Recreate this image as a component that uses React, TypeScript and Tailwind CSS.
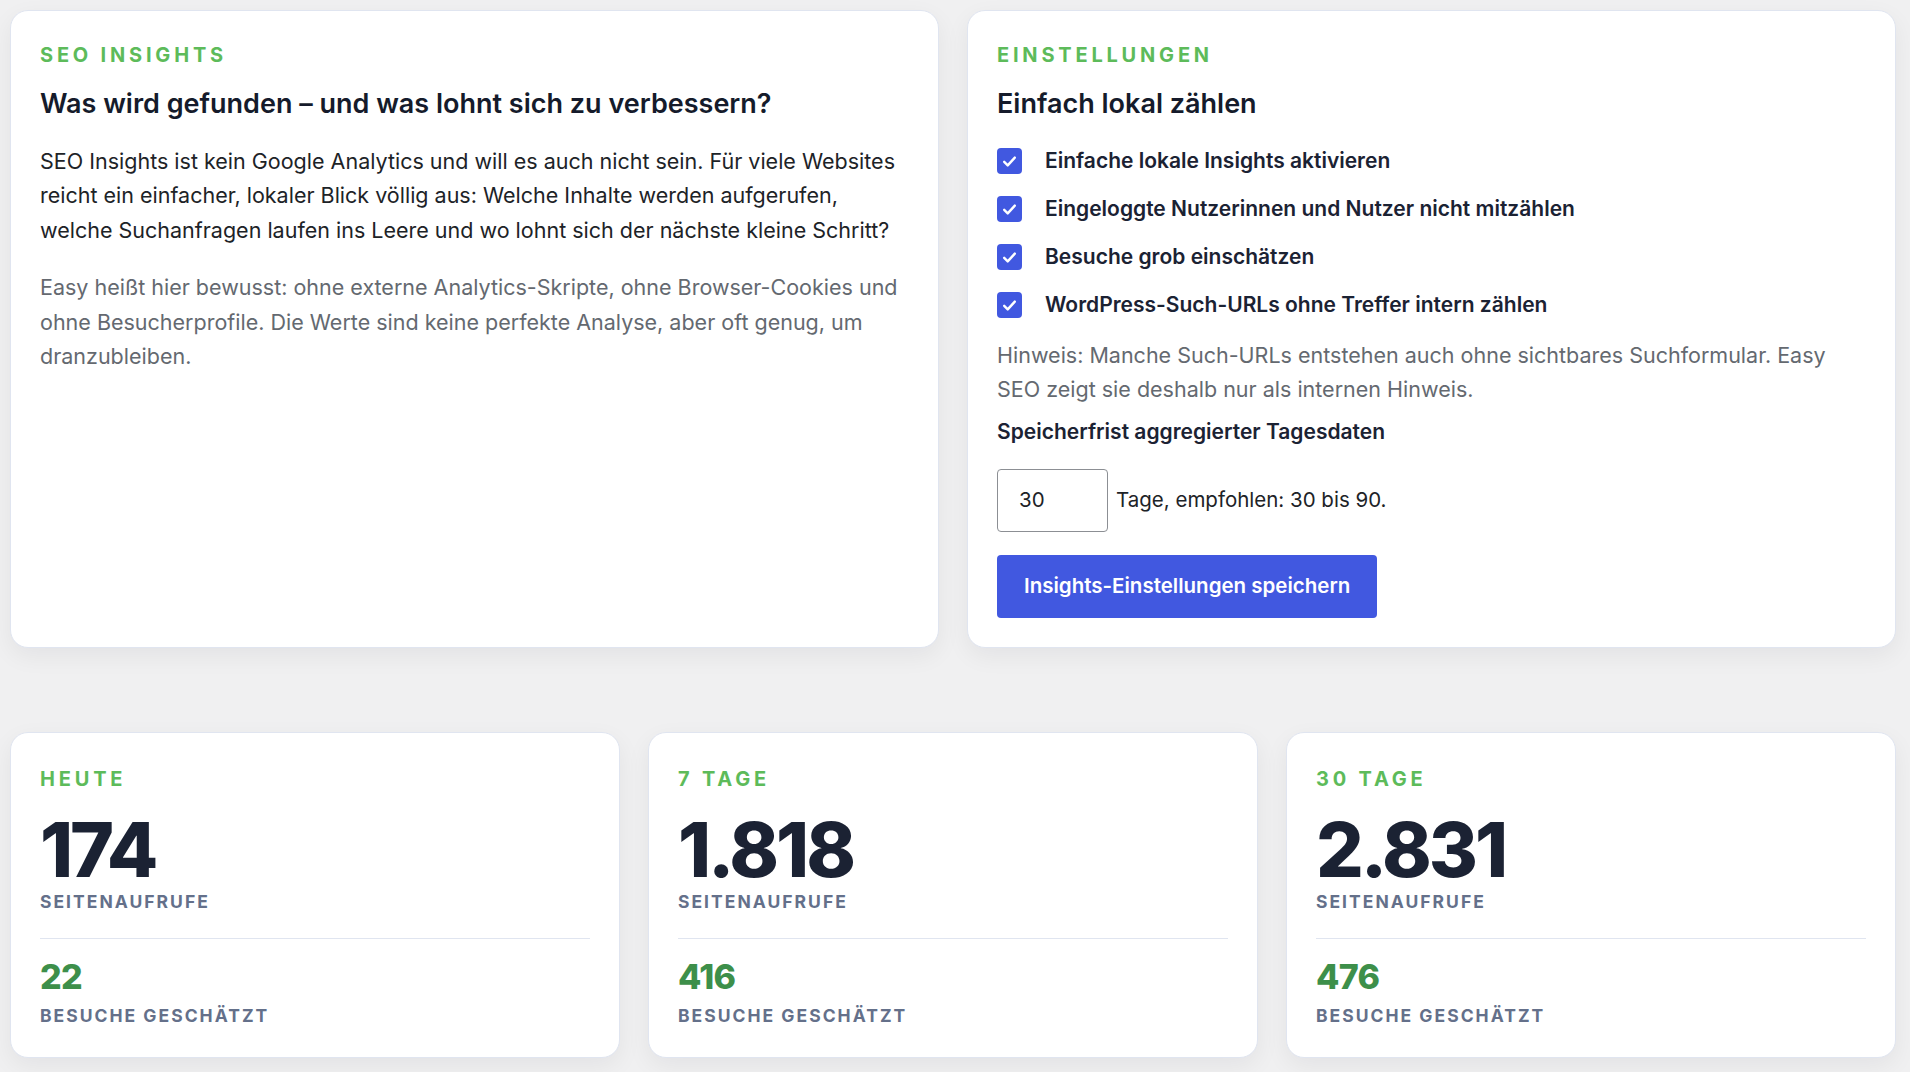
import React from "react";

const stats = [
  { label: "Heute", views: "174", visits: "22" },
  { label: "7 Tage", views: "1.818", visits: "416" },
  { label: "30 Tage", views: "2.831", visits: "476" },
];

const options = [
  "Einfache lokale Insights aktivieren",
  "Eingeloggte Nutzerinnen und Nutzer nicht mitzählen",
  "Besuche grob einschätzen",
  "WordPress-Such-URLs ohne Treffer intern zählen",
];

function CheckBox() {
  return (
    <span className="flex h-[26px] w-[25px] shrink-0 items-center justify-center rounded-[4px] bg-[#4158e0]">
      <svg width="17" height="17" viewBox="0 0 24 24" fill="none">
        <path d="M4.5 12.5l5 5L19.5 6.5" stroke="white" strokeWidth="3.4" strokeLinecap="round" strokeLinejoin="round" />
      </svg>
    </span>
  );
}

export default function App() {
  return (
    <div className="min-h-screen bg-[#f0f0f1] pt-[10px] pl-[10px] pr-[14px] pb-[14px] font-['Inter',sans-serif] text-[#1d2327]">
      {/* Top row */}
      <div className="grid grid-cols-2 gap-[28px]">
        {/* Intro */}
        <section className="rounded-[18px] border border-[#e0e5f0] bg-white p-[29px] shadow-[0_8px_24px_rgba(15,23,42,0.06)]">
          <div className="text-[20px] leading-[30px] font-bold uppercase tracking-[0.19em] text-[#5dbb5a]">SEO Insights</div>
          <h2 className="mt-[16px] text-[27px] leading-[35px] font-semibold text-[#151b2b]">
            Was wird gefunden – und was lohnt sich zu verbessern?
          </h2>
          <p className="mt-[23px] text-[21.5px] leading-[34.4px] text-[#1d2327]">
            SEO Insights ist kein Google Analytics und will es auch nicht sein. Für viele Websites reicht ein einfacher,
            lokaler Blick völlig aus: Welche Inhalte werden aufgerufen, welche Suchanfragen laufen ins Leere und wo lohnt
            sich der nächste kleine Schritt?
          </p>
          <p className="mt-[23px] text-[21.5px] leading-[34.6px] text-[#646970]">
            Easy heißt hier bewusst: ohne externe Analytics-Skripte, ohne Browser-Cookies und ohne Besucherprofile. Die
            Werte sind keine perfekte Analyse, aber oft genug, um dranzubleiben.
          </p>
        </section>

        {/* Settings */}
        <section className="rounded-[18px] border border-[#e0e5f0] bg-white p-[29px] shadow-[0_8px_24px_rgba(15,23,42,0.06)]">
          <div className="text-[20px] leading-[30px] font-bold uppercase tracking-[0.19em] text-[#5dbb5a]">Einstellungen</div>
          <h2 className="mt-[16px] text-[27px] leading-[35px] font-semibold text-[#151b2b]">Einfach lokal zählen</h2>
          <div className="mt-[27px] flex flex-col gap-[22px]">
            {options.map((o) => (
              <label key={o} className="flex items-center gap-[23px]">
                <CheckBox />
                <span className="text-[21px] leading-[26px] font-semibold text-[#1b2233]">{o}</span>
              </label>
            ))}
          </div>
          <p className="mt-[20px] text-[21.5px] leading-[34.4px] text-[#646970]">
            Hinweis: Manche Such-URLs entstehen auch ohne sichtbares Suchformular. Easy SEO zeigt sie deshalb nur als
            internen Hinweis.
          </p>
          <div className="mt-[11px] text-[21px] leading-[28px] font-semibold text-[#1b2233]">
            Speicherfrist aggregierter Tagesdaten
          </div>
          <div className="mt-[23px] flex items-center gap-[8px]">
            <div className="flex h-[63px] w-[111px] items-center rounded-[4px] border border-[#8c8f94] bg-white pl-[21px] text-[20.5px] text-[#1d2327]">
              30
            </div>
            <span className="text-[20.5px] text-[#1d2327]">Tage, empfohlen: 30 bis 90.</span>
          </div>
          <button className="mt-[23px] h-[63px] rounded-[4px] bg-[#4158e0] px-[27px] text-[20.5px] font-semibold text-white">
            Insights-Einstellungen speichern
          </button>
        </section>
      </div>

      {/* Stats */}
      <div className="mt-[84px] grid grid-cols-3 gap-[28px]">
        {stats.map((s) => (
          <section
            key={s.label}
            className="rounded-[18px] border border-[#e0e5f0] bg-white px-[29px] pt-[31px] pb-[29px] shadow-[0_8px_24px_rgba(15,23,42,0.06)]"
          >
            <div className="text-[20px] leading-[30px] font-bold uppercase tracking-[0.19em] text-[#5dbb5a]">{s.label}</div>
            <div className="mt-[18px] text-[75px] leading-[75px] font-extrabold tracking-[-0.04em] text-[#1b2233]">
              {s.views}
            </div>
            <div className="mt-[3px] text-[17.5px] leading-[24px] font-bold uppercase tracking-[0.115em] text-[#64708a]">
              Seitenaufrufe
            </div>
            <div className="mt-[24px] border-t border-[#e0e5f0]" />
            <div className="mt-[21px] text-[34px] leading-[34px] font-extrabold tracking-[-0.02em] text-[#3d8f4a]">
              {s.visits}
            </div>
            <div className="mt-[10px] text-[17.5px] leading-[24px] font-bold uppercase tracking-[0.115em] text-[#64708a]">
              Besuche geschätzt
            </div>
          </section>
        ))}
      </div>
    </div>
  );
}
